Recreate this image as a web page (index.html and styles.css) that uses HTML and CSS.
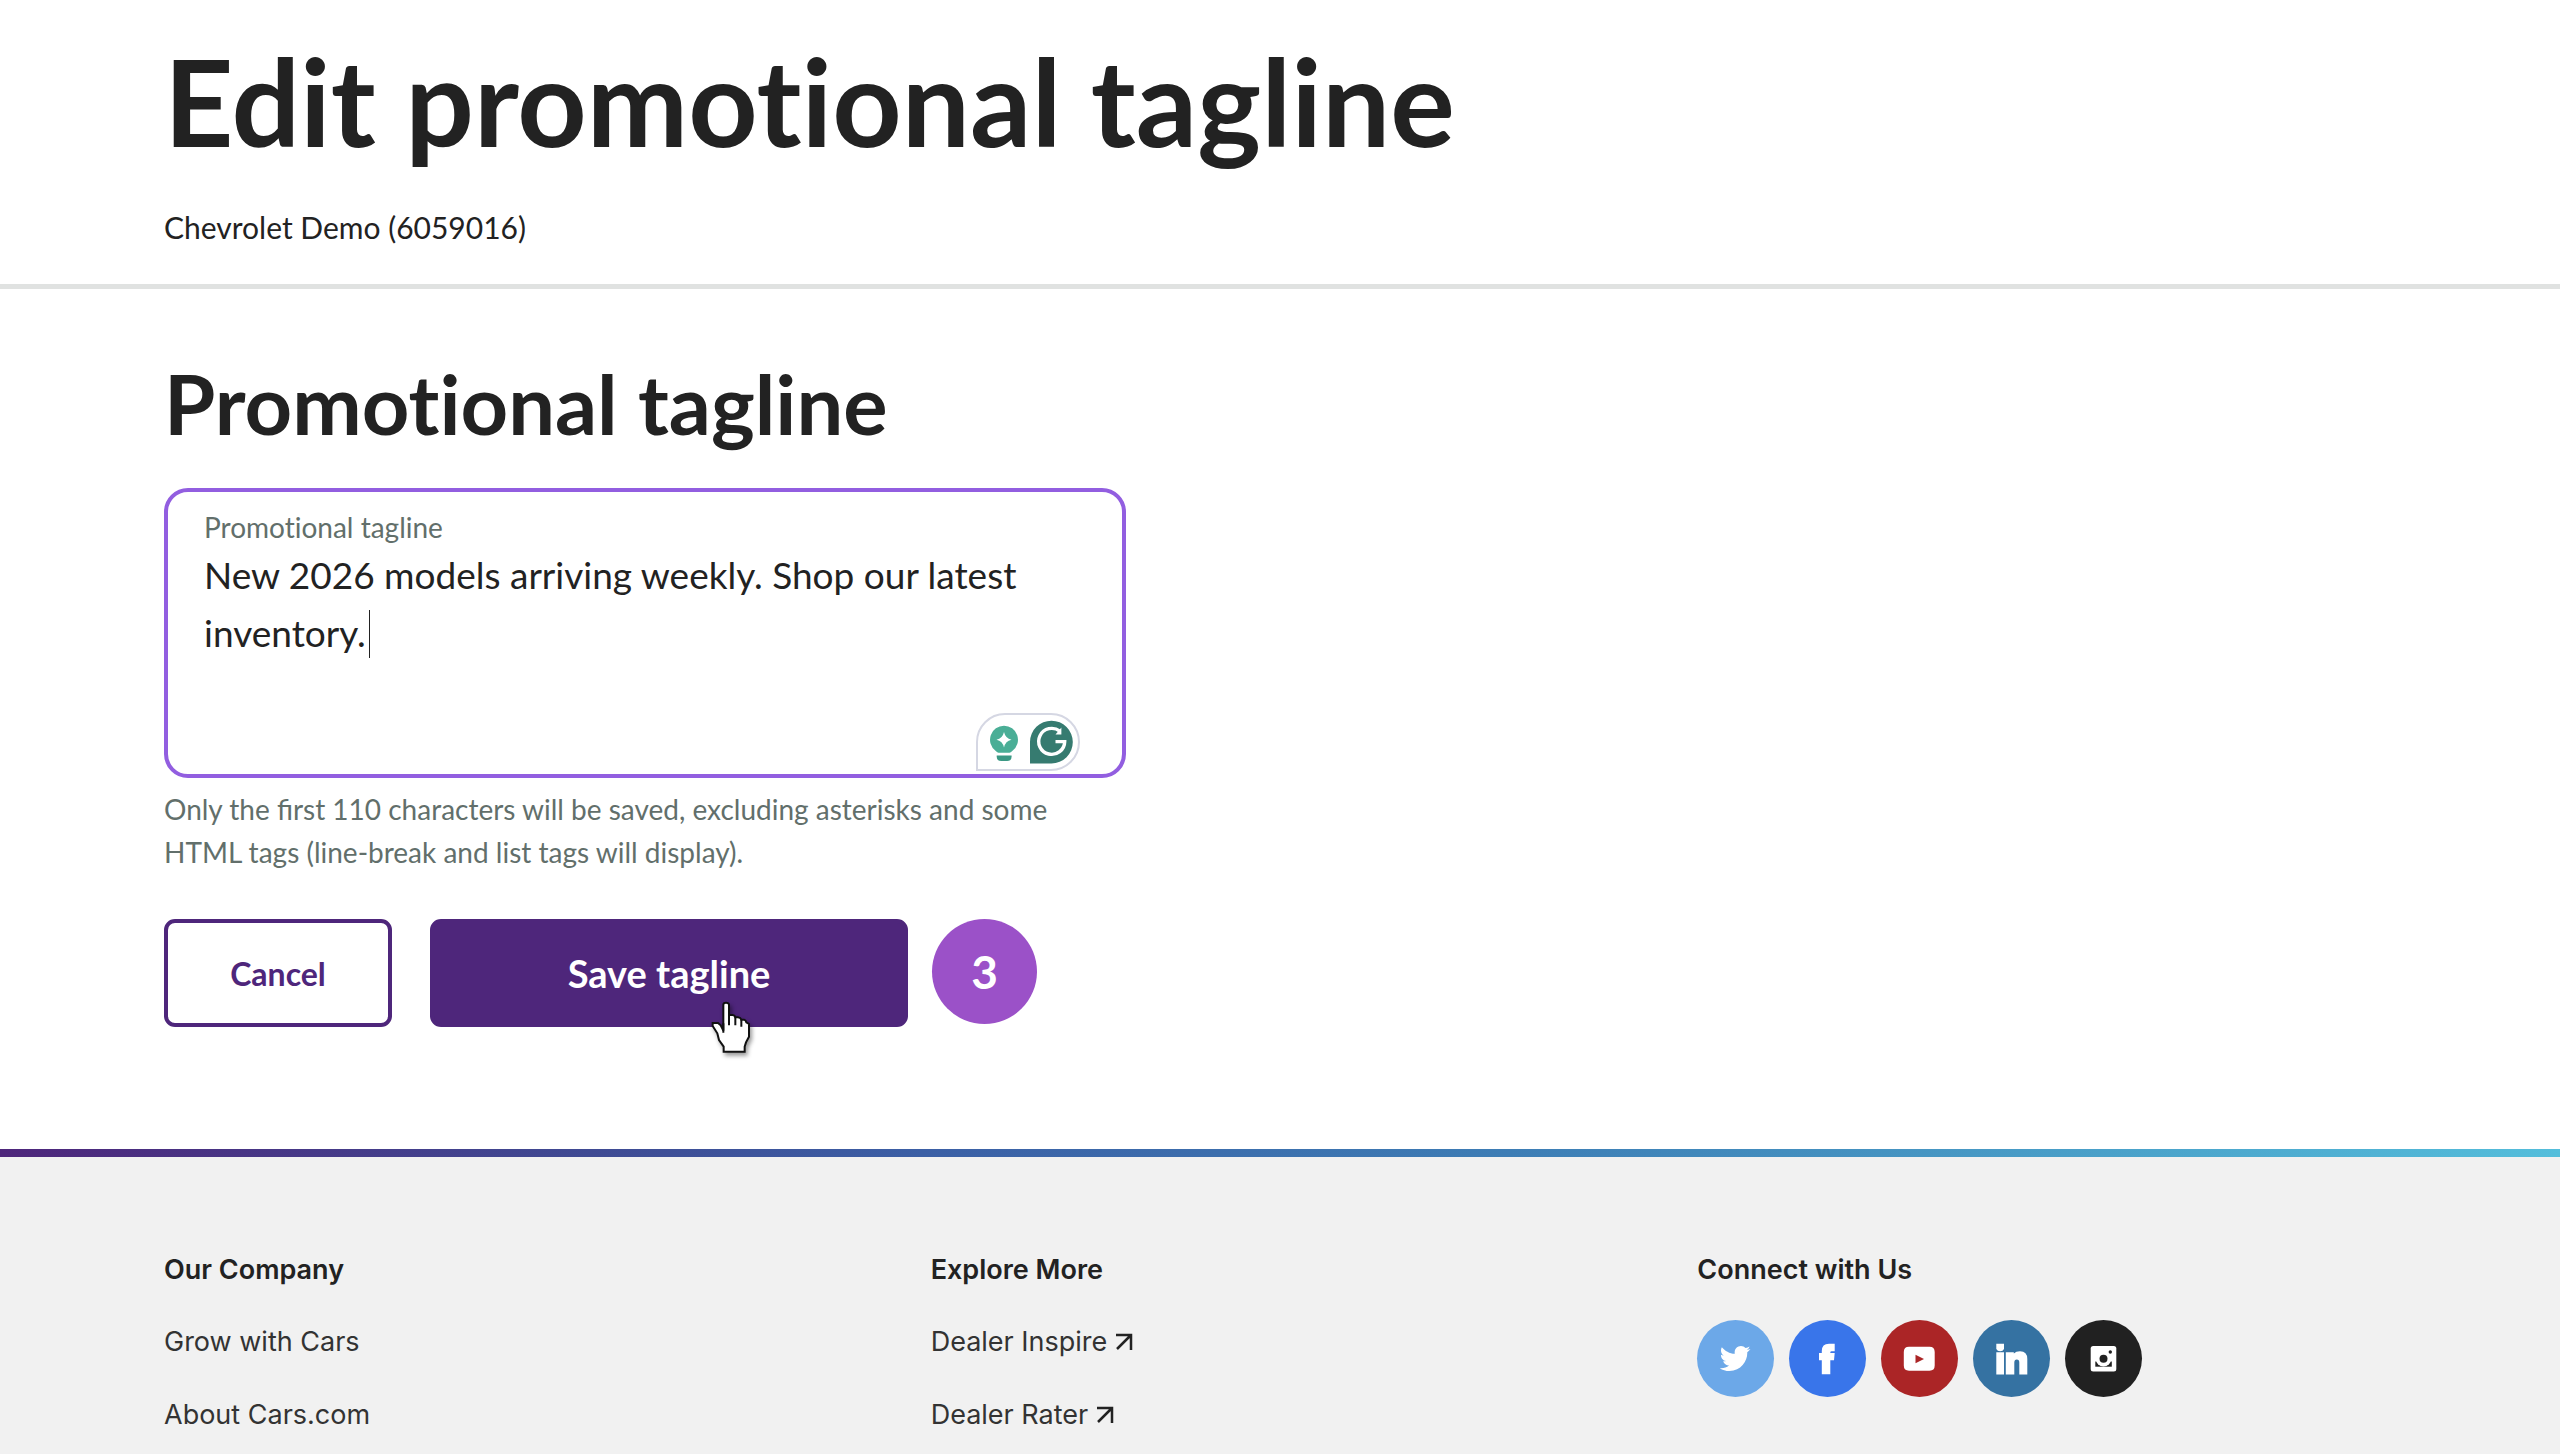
FILE: index.html
```html
<!DOCTYPE html>
<html lang="en">
<head>
<meta charset="utf-8">
<meta name="viewport" content="width=device-width, initial-scale=1">
<title>Edit promotional tagline</title>
<link rel="stylesheet" href="styles.css">
</head>
<body>
<header class="page-header">
  <h1 class="page-title">Edit promotional tagline</h1>
  <p class="dealer">Chevrolet Demo (6059016)</p>
</header>

<main class="content">
  <h2 class="section-title">Promotional tagline</h2>
  <form class="form">
    <div class="field">
      <label class="field-label" for="tagline">Promotional tagline</label>
      <textarea class="field-input" id="tagline" spellcheck="false" aria-describedby="tagline-help">New 2026 models arriving weekly. Shop our latest inventory.</textarea>
      <span class="caret"></span>
      <svg class="assistant" viewBox="0 0 104 58" aria-hidden="true">
        <path d="M1 57V29A28 28 0 0 1 29 1H75A28 28 0 0 1 75 57Z" fill="#fff" stroke="#d5d7e3" stroke-width="2"/>
        <path d="M28 12.700A14 14 0 0 0 19.500 37.800Q21.500 39.800 22.500 39.800H33.500Q34.500 39.800 36.500 37.800A14 14 0 0 0 28 12.700Z" fill="#4aae96"/>
        <path d="M28 19Q29.400 25.300 35.500 26.700Q29.400 28.100 28 34.400Q26.600 28.100 20.500 26.700Q26.600 25.300 28 19Z" fill="#fff"/>
        <path d="M20.700 42.500H35.600V43.500Q35.600 48 31 48H25.300Q20.700 48 20.700 43.500Z" fill="#3b9884"/>
        <path d="M54 50.500V28.900A21.400 21.400 0 1 1 75.500 50.500Z" fill="#367b70"/>
        <path d="M83.800 18.200A13 13 0 1 0 88.700 28.600H79.500" fill="none" stroke="#fff" stroke-width="3.400"/>
        <path d="M85.400 14.500V21.600H79.500Z" fill="#fff"/>
      </svg>
    </div>
    <p class="help" id="tagline-help">Only the first 110 characters will be saved, excluding asterisks and some HTML tags (line-break and list tags will display).</p>
    <div class="actions">
      <button class="btn btn-outline" type="button">Cancel</button>
      <button class="btn btn-primary" type="submit">Save tagline
        <svg class="pointer" viewBox="0 0 240 240" aria-hidden="true">
          <path d="M100 122V44Q100 38 108 38T117 44V75H128Q135 76 136 82H144Q152 83 154 89H162Q168 91 169 97L177 102V140L168 157L164 170V185H101V170L87 150L82 130L68 108V99H84L92 106Z" fill="#fff" stroke="#111" stroke-width="6"/>
          <path d="M117 72V106M136 80V106M154 88V110M100 100V128" fill="none" stroke="#111" stroke-width="6"/>
        </svg>
      </button>
      <span class="step">3</span>
    </div>
  </form>
</main>

<footer class="footer">
  <nav class="footer-col" aria-label="Our Company">
    <h3 class="footer-title">Our Company</h3>
    <ul class="links">
      <li><a class="link" href="#">Grow with Cars</a></li>
      <li><a class="link" href="#">About Cars.com</a></li>
    </ul>
  </nav>
  <nav class="footer-col" aria-label="Explore More">
    <h3 class="footer-title">Explore More</h3>
    <ul class="links">
      <li><a class="link" href="#">Dealer Inspire <svg class="arrow" viewBox="0 0 18 18" aria-hidden="true"><path d="M1 2H16V17M16 2L2 16"/></svg></a></li>
      <li><a class="link" href="#">Dealer Rater <svg class="arrow" viewBox="0 0 18 18" aria-hidden="true"><path d="M1 2H16V17M16 2L2 16"/></svg></a></li>
    </ul>
  </nav>
  <div class="footer-col">
    <h3 class="footer-title">Connect with Us</h3>
    <div class="social">
      <a class="social-link twitter" href="#" aria-label="Twitter"><svg viewBox="0 0 77 77"><path transform="translate(22.700 23.200) scale(.060)" d="M459.370 151.716c.325 4.548.325 9.097.325 13.645 0 138.720-105.583 298.558-298.558 298.558-59.452 0-114.680-17.219-161.137-47.106 8.447.974 16.568 1.299 25.340 1.299 49.055 0 94.213-16.568 130.274-44.832-46.132-.975-84.792-31.188-98.112-72.772 6.498.974 12.995 1.624 19.818 1.624 9.421 0 18.843-1.300 27.614-3.573-48.081-9.747-84.143-51.980-84.143-102.985v-1.299c13.969 7.797 30.214 12.670 47.431 13.319-28.264-18.843-46.781-51.005-46.781-87.391 0-19.492 5.197-37.360 14.294-52.954 51.655 63.675 129.300 105.258 216.365 109.807-1.624-7.797-2.599-15.918-2.599-24.040 0-57.828 46.782-104.934 104.934-104.934 30.213 0 57.502 12.670 76.670 33.137 23.715-4.548 46.456-13.320 66.599-25.340-7.798 24.366-24.366 44.833-46.132 57.827 21.117-2.273 41.584-8.122 60.426-16.243-14.292 20.791-32.161 39.308-52.628 54.253z"/></svg></a>
      <a class="social-link facebook" href="#" aria-label="Facebook"><svg viewBox="0 0 77 77"><path d="M45.700 23.700H40Q32.800 23.700 32.800 31V33H30V40.300H32.800V54.300H41.300V40.300H45L45.700 33H41.300V32.500Q41.300 31.200 42.600 31.200H45.700Z"/></svg></a>
      <a class="social-link youtube" href="#" aria-label="YouTube"><svg viewBox="0 0 77 77"><path fill-rule="evenodd" d="M28 26.700H48.500Q53.700 26.700 53.700 32V45.500Q53.700 50.700 48.500 50.700H28Q22.800 50.700 22.800 45.500V32Q22.800 26.700 28 26.700ZM34.500 34.700V43.300L43 39Z"/></svg></a>
      <a class="social-link linkedin" href="#" aria-label="LinkedIn"><svg viewBox="0 0 77 77"><path d="M23.300 23.700H31V29Q30 31.300 27.200 31.300T23.300 29ZM23.300 32.200H31V54.500H23.300ZM32.800 32.200H40.800V33.500Q43 31.200 47 31.200Q54.300 31.200 54.300 39V54.500H46.300V42.500Q46.300 39.500 43.800 39.500T41.300 42.500V54.500H32.800Z"/></svg></a>
      <a class="social-link instagram" href="#" aria-label="Instagram"><svg viewBox="0 0 77 77"><rect x="25.700" y="26" width="25.600" height="25.600" rx="2.500"/><path class="cut" d="M30.300 41.500V46.700H46.800V41.500Z"/><circle cx="38.500" cy="38.700" r="7.700"/><circle class="cut" cx="38.500" cy="38.700" r="4"/><circle class="cut" cx="45.300" cy="32" r="1.700"/></svg></a>
    </div>
  </div>
</footer>
</body>
</html>
```
FILE: styles.css
```css
* { box-sizing: border-box; }

:root {
  --gutter: 164px;
  --ink: #222;
  --muted: #626f6b;
  --brand: #4e267b;
}

body {
  margin: 0;
  min-height: 100vh;
  display: flex;
  flex-direction: column;
  background: #fff;
  color: var(--ink);
  font-family: Lato, sans-serif;
}

h1, h2, h3, p, ul { margin: 0; }

.page-header {
  padding: 29px var(--gutter) 37px;
  border-bottom: 5px solid #e0e2e1;
}
.page-title,
.section-title,
.field-label {
  font-variant-ligatures: none;
}
.page-title {
  font-size: 121px;
  line-height: 144px;
  font-weight: 700;
}
.dealer {
  margin-top: 34px;
  font-size: 30px;
  line-height: 40px;
}

.content { padding: 64px var(--gutter) 122px; }
.section-title {
  font-size: 83px;
  line-height: 100px;
  font-weight: 700;
}

.form {
  max-width: 962px;
  margin-top: 35px;
}
.field {
  position: relative;
  display: flex;
  flex-direction: column;
  height: 290px;
  padding: 16px 36px 0;
  border: 4px solid #925ee0;
  border-radius: 24px;
}
.field-label {
  font-size: 28px;
  line-height: 38px;
  color: var(--muted);
}
.field-input {
  flex: 1;
  width: 100%;
  padding: 0;
  border: 0;
  outline: 0;
  resize: none;
  overflow: hidden;
  background: transparent;
  color: var(--ink);
  font-family: inherit;
  font-size: 37px;
  line-height: 58px;
}
.caret {
  position: absolute;
  left: 201px;
  top: 118px;
  width: 1px;
  height: 48px;
  background: var(--ink);
}
.assistant {
  position: absolute;
  right: 42px;
  bottom: 3px;
  width: 104px;
  height: 58px;
}
.help {
  margin-top: 10px;
  font-size: 28px;
  line-height: 43px;
  color: var(--muted);
}

.actions {
  display: flex;
  margin-top: 45px;
}
.btn {
  position: relative;
  height: 108px;
  padding: 0;
  border: 4px solid var(--brand);
  border-radius: 11px;
  font-family: inherit;
  font-weight: 700;
}
.btn-outline {
  width: 228px;
  background: #fff;
  color: var(--brand);
  font-size: 32px;
}
.btn-primary {
  width: 478px;
  margin-left: 38px;
  background: var(--brand);
  color: #fff;
  font-size: 38px;
}
.pointer {
  position: absolute;
  left: 256px;
  top: 67px;
  width: 80px;
  height: 80px;
  filter: drop-shadow(2px 3px 2px rgba(0, 0, 0, .4));
}
.step {
  display: flex;
  align-items: center;
  justify-content: center;
  width: 105px;
  height: 105px;
  margin-left: 24px;
  border-radius: 50%;
  background: #9b51c8;
  color: #fff;
  font-size: 46px;
  font-weight: 700;
}

.footer {
  flex: 1;
  display: grid;
  grid-template-columns: repeat(3, 1fr);
  gap: 68px;
  padding: 91px var(--gutter) 16px;
  background:
    linear-gradient(90deg, #4e267b, #3f4a93 23%, #3b5fa5 36%, #3d7db5 59%, #4798c4 77%, #54bedb) top / 100% 8px no-repeat,
    #f1f1f1;
  font-family: Inter, sans-serif;
  font-size: 27px;
  line-height: 44px;
}
.footer {
  padding-top: 99px;
}
.footer-title {
  margin-bottom: 28px;
  font-size: 27px;
  font-weight: 600;
}
.links {
  display: grid;
  gap: 29px;
  padding: 0;
  list-style: none;
}
.link {
  color: #333;
  text-decoration: none;
}
.arrow {
  width: 18px;
  height: 18px;
  fill: none;
  stroke: var(--ink);
  stroke-width: 2.5;
}
.social {
  display: flex;
  gap: 15px;
}
.social-link {
  width: 77px;
  height: 77px;
  border-radius: 50%;
}
.social-link svg {
  display: block;
  width: 100%;
  height: 100%;
  fill: #fff;
}
.social-link .cut { fill: #212121; }
.twitter { background: #6ca8e8; }
.facebook { background: #3975ea; }
.youtube { background: #ab2526; }
.linkedin { background: #3572a2; }
.instagram { background: #212121; }
```
